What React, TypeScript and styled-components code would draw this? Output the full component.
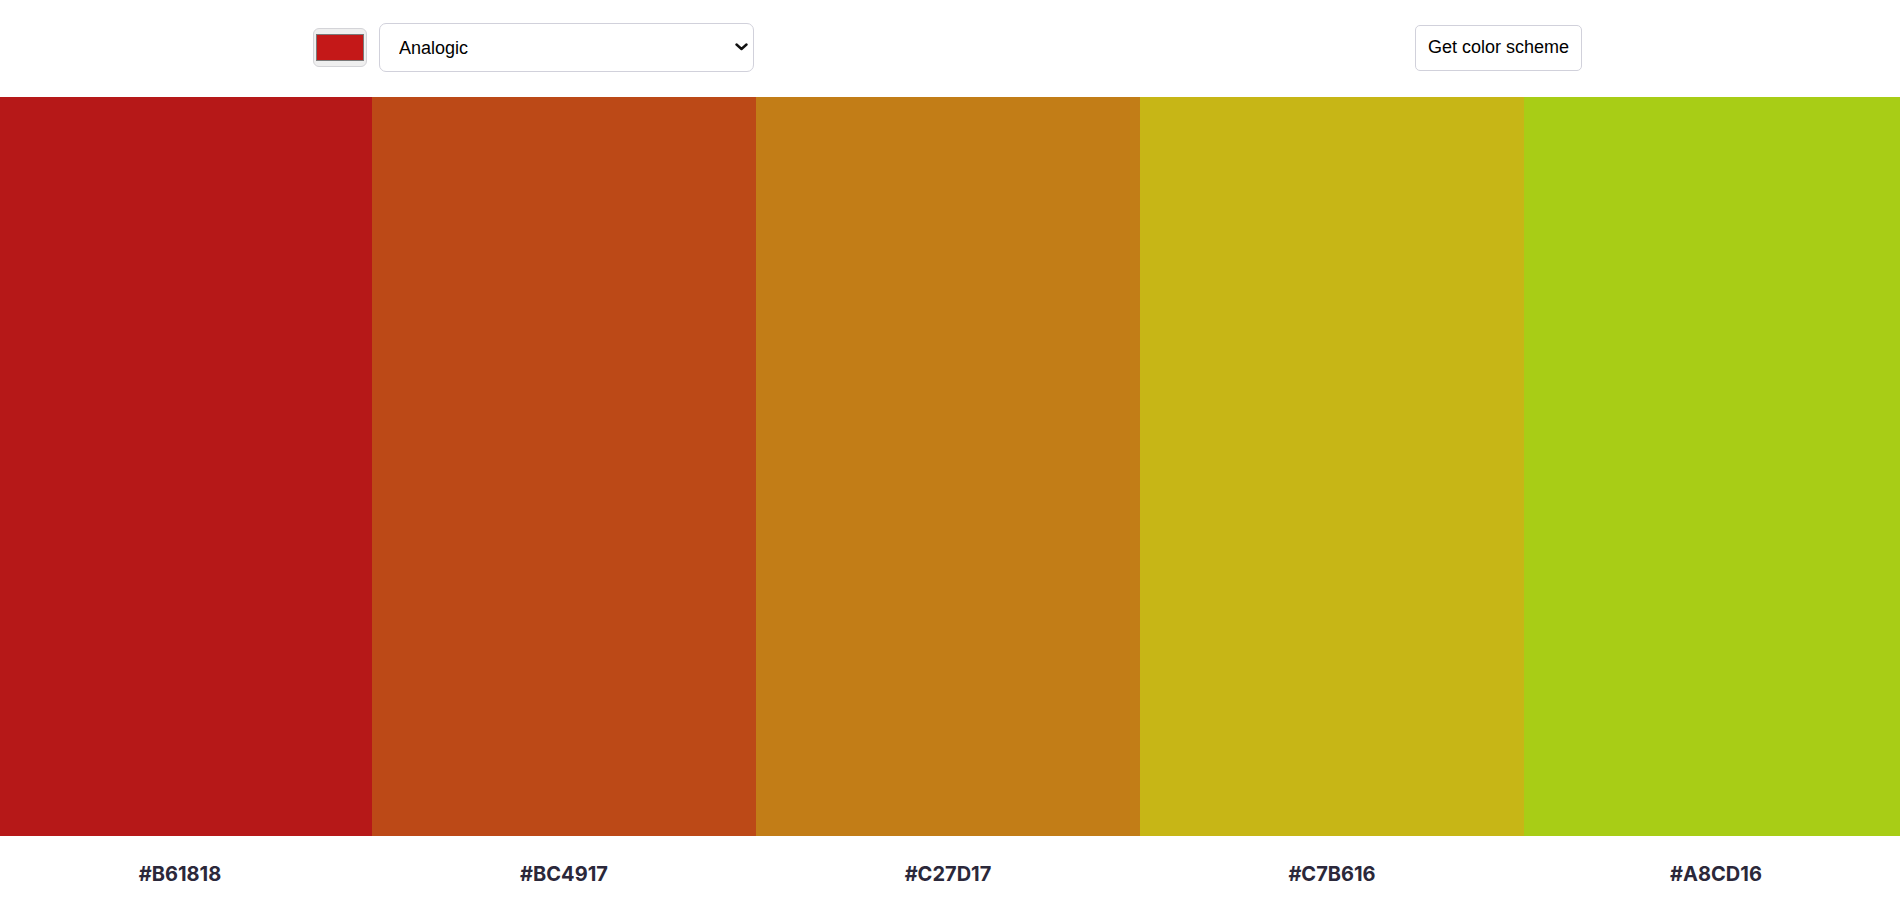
import React, { useState } from "react";
import styled, { createGlobalStyle } from "styled-components";

const GlobalStyle = createGlobalStyle`
  html, body { margin: 0; padding: 0; background: #ffffff; }
  body { font-family: Inter, "Noto Sans", sans-serif; overflow: hidden; }
  * { box-sizing: border-box; }
`;

const Page = styled.div`
  display: flex;
  flex-direction: column;
  width: 1900px;
  height: 910px;
  overflow: hidden;
`;

const Header = styled.header`
  display: flex;
  align-items: center;
  justify-content: space-between;
  height: 97px;
  padding: 0 318px 2px 313px;
`;

const Controls = styled.div`
  display: flex;
  align-items: center;
  gap: 12px;
`;

const ColorInput = styled.input`
  width: 54px;
  height: 39px;
  padding: 5px 2px;
  border: 1px solid #d4d4d8;
  border-radius: 6px;
  background: #efefef;
  cursor: pointer;
  &::-webkit-color-swatch-wrapper { padding: 0; }
  &::-webkit-color-swatch { border: 1px solid #7a7a7a; border-radius: 0; }
`;

const SelectWrap = styled.div`
  position: relative;
  display: flex;
`;

const ModeSelect = styled.select`
  appearance: none;
  width: 375px;
  height: 49px;
  padding: 0 36px 0 19px;
  border: 1px solid #d1d1db;
  border-radius: 7px;
  background: #ffffff;
  font-family: "Liberation Sans", Arial, sans-serif;
  font-size: 18px;
  color: #000000;
  cursor: pointer;
`;

const Chevron = styled.svg`
  position: absolute;
  right: 6px;
  top: 20px;
  width: 13px;
  height: 8px;
  pointer-events: none;
`;

const SchemeButton = styled.button`
  height: 46px;
  padding: 0 12px;
  border: 1px solid #d1d1db;
  border-radius: 5px;
  background: #ffffff;
  font-family: "Liberation Sans", Arial, sans-serif;
  font-size: 18px;
  color: #000000;
  cursor: pointer;
`;

const Palette = styled.main`
  display: grid;
  grid-template-columns: repeat(5, 384px);
  grid-template-rows: 739px 1fr;
  grid-auto-flow: column;
  width: 1920px;
  margin-left: -12px;
  flex: 1;
`;

const Swatch = styled.div<{ $color: string }>`
  background: ${(p) => p.$color};
`;

const HexLabel = styled.p`
  margin: 0;
  display: flex;
  align-items: center;
  justify-content: center;
  padding-top: 2px;
  font-family: Inter, "Noto Sans", sans-serif;
  font-weight: 700;
  font-size: 20px;
  color: #2b283a;
`;

const COLORS = ["#B61818", "#BC4917", "#C27D17", "#C7B616", "#A8CD16"];

export default function App() {
  const [seed, setSeed] = useState("#c41818");
  const [mode, setMode] = useState("analogic");
  return (
    <>
      <GlobalStyle />
      <Page>
        <Header>
          <Controls>
            <ColorInput
              type="color"
              value={seed}
              onChange={(e) => setSeed(e.target.value)}
            />
            <SelectWrap>
              <ModeSelect value={mode} onChange={(e) => setMode(e.target.value)}>
                <option value="monochrome">Monochrome</option>
                <option value="monochrome-dark">Monochrome-dark</option>
                <option value="monochrome-light">Monochrome-light</option>
                <option value="analogic">Analogic</option>
                <option value="complement">Complement</option>
                <option value="analogic-complement">Analogic-complement</option>
                <option value="triad">Triad</option>
              </ModeSelect>
              <Chevron viewBox="0 0 13 8" aria-hidden="true">
                <path
                  d="M1.5 1.5 L6.5 6 L11.5 1.5"
                  fill="none"
                  stroke="#111111"
                  strokeWidth="2.4"
                  strokeLinecap="round"
                  strokeLinejoin="round"
                />
              </Chevron>
            </SelectWrap>
          </Controls>
          <SchemeButton type="button">Get color scheme</SchemeButton>
        </Header>
        <Palette>
          {COLORS.map((c) => (
            <React.Fragment key={c}>
              <Swatch $color={c} />
              <HexLabel>{c}</HexLabel>
            </React.Fragment>
          ))}
        </Palette>
      </Page>
    </>
  );
}
